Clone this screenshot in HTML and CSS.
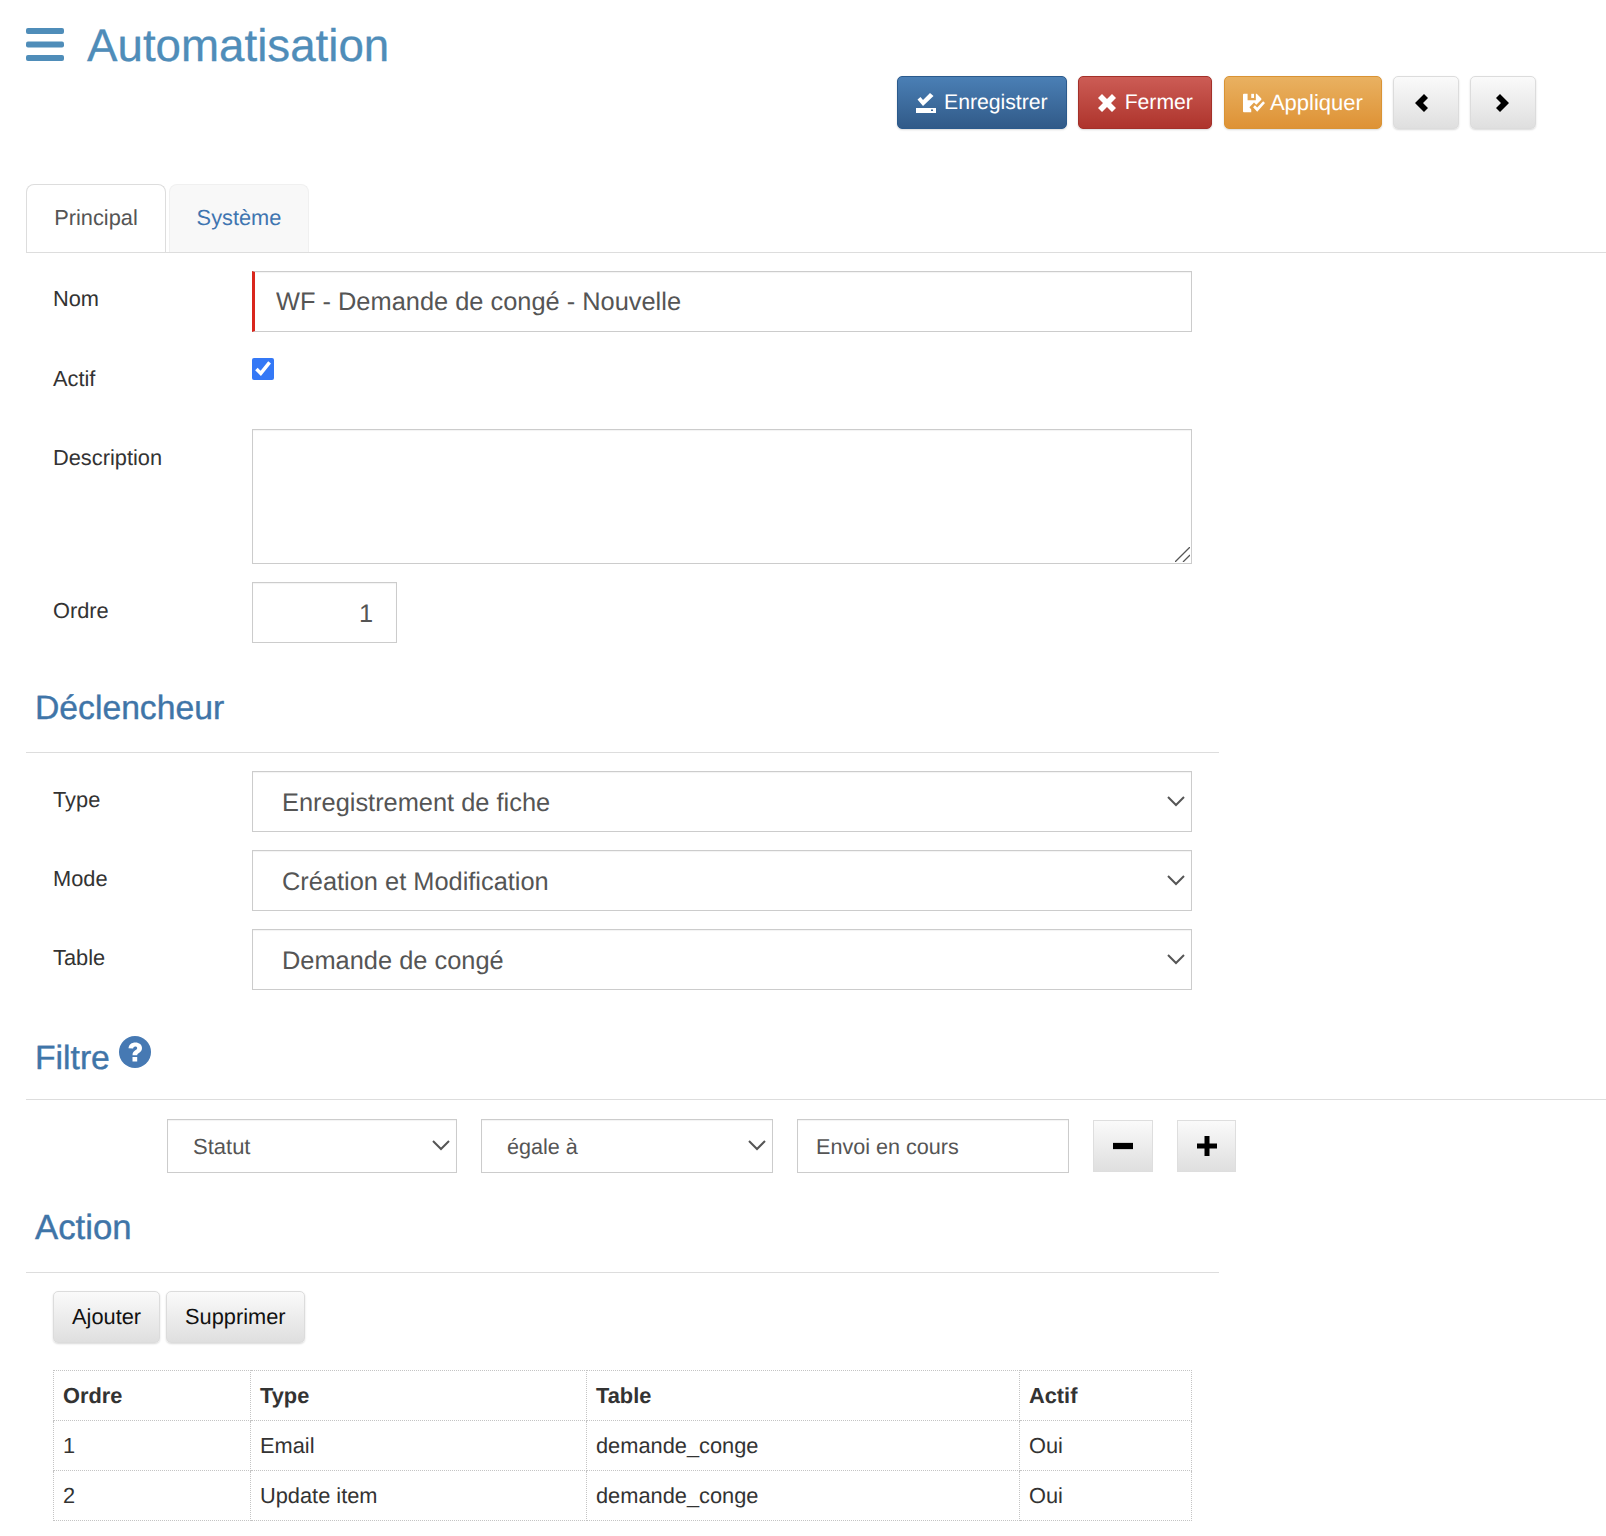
FILE: index.html
```html
<!doctype html>
<html>
  <head>
    <title>Automatisation</title>
    <meta name="viewport" content="width=device-width, initial-scale=1.0" />
    <link rel="stylesheet" href="styles.css">
  </head>
  <body>
    <div class="page-head">
      <svg class="burger" viewBox="0 0 38 33"><rect width="38" height="6" y="0" rx="2"/><rect width="38" height="6" y="13.5" rx="2"/><rect width="38" height="6" y="27" rx="2"/></svg>
      <h1>Automatisation</h1>
    </div>

    <div class="toolbar">
      <button class="btn btn-blue">
        <svg viewBox="0 0 20 20" class="ico"><path d="M1.500 6.500L4.500 4 7 7l7-7 3.500 3L7 13z"/><path fill-rule="evenodd" d="M0 15h20v5H0zM15 16.500v1.500h2v-1.500z"/></svg>
        Enregistrer
      </button>
      <button class="btn btn-red">
        <svg viewBox="0 0 20 20" class="ico"><path d="M5 1l5 5 5-5 4 4-5 5 5 5-4 4-5-5-5 5-4-4 5-5-5-5z"/></svg>
        Fermer
      </button>
      <button class="btn btn-orange">
        <svg viewBox="0 0 24 20" class="ico ico-wide"><path d="M0 1a1 1 0 011-1h4v7h9V0h1l5 5v1.500l-5.500 5.500-2.500-2.500-5 5 2 2.500v3H1a1 1 0 01-1-1z"/><path d="M9 0h3v4.500H9z"/><path d="M11 14.500l2-2 2.500 2.500 6.500-7 2 2-8.500 9.500z"/></svg>
        Appliquer
      </button>
      <button class="btn btn-grey btn-arrow arrow-prev">
        <svg viewBox="0 0 14 18" class="arrow"><path d="M9 0l4 4-5 5 5 5-4 4-9-9z"/></svg>
      </button>
      <button class="btn btn-grey btn-arrow arrow-next">
        <svg viewBox="0 0 14 18" class="arrow"><path d="M5 0l9 9-9 9-4-4 5-5-5-5z"/></svg>
      </button>
    </div>

    <div class="tabs">
      <a class="tab active">Principal</a>
      <a class="tab">Système</a>
    </div>

    <div class="form-row row-name">
      <label>Nom</label>
      <input class="field required" type="text" value="WF - Demande de congé - Nouvelle" />
    </div>
    <div class="form-row row-check">
      <label>Actif</label>
      <input class="check" type="checkbox" checked />
    </div>
    <div class="form-row row-desc">
      <label>Description</label>
      <div class="area-wrap">
        <textarea class="field area"></textarea>
        <svg class="grip" viewBox="0 0 15 15"><path d="M0 15L15 0M8 15l7-7"/></svg>
      </div>
    </div>
    <div class="form-row row-order">
      <label>Ordre</label>
      <input class="field number" type="text" value="1" />
    </div>

    <h2 class="section trigger-title">Déclencheur</h2>
    <hr class="rule short" />
    <div class="form-row row-select">
      <label>Type</label>
      <div class="select big"><span>Enregistrement de fiche</span><svg class="chev" viewBox="0 0 18 11"><path d="M1 1l8 8 8-8"/></svg></div>
    </div>
    <div class="form-row row-select">
      <label>Mode</label>
      <div class="select big"><span>Création et Modification</span><svg class="chev" viewBox="0 0 18 11"><path d="M1 1l8 8 8-8"/></svg></div>
    </div>
    <div class="form-row row-select">
      <label>Table</label>
      <div class="select big"><span>Demande de congé</span><svg class="chev" viewBox="0 0 18 11"><path d="M1 1l8 8 8-8"/></svg></div>
    </div>

    <h2 class="section filter-title">Filtre
      <svg class="help" viewBox="0 0 32 32"><circle cx="16" cy="16" r="16"/><path class="help-mark" d="M9.500 12.200C9.900 8.600 12.600 6.500 16.400 6.500c3.800 0 6.600 2.300 6.600 5.500 0 2.500-1.300 3.800-3 4.900-1.300.8-1.800 1.300-1.800 2.300h-4.700c0-2.600 1-3.800 2.800-5 1.300-.8 1.900-1.300 1.900-2.200 0-1-.8-1.600-1.900-1.600-1.200 0-2 .8-2.200 2.200zM13.500 21h4.700v4.500h-4.700z"/></svg>
    </h2>
    <hr class="rule filter-rule" />
    <div class="filter-row">
      <div class="select small sel-a"><span>Statut</span><svg class="chev" viewBox="0 0 18 11"><path d="M1 1l8 8 8-8"/></svg></div>
      <div class="select small sel-b"><span>égale à</span><svg class="chev" viewBox="0 0 18 11"><path d="M1 1l8 8 8-8"/></svg></div>
      <input class="field filter-value" type="text" value="Envoi en cours" />
      <button class="square"><svg viewBox="0 0 16 16"><path d="M0 5.500h16v5H0z"/></svg></button>
      <button class="square square-plus"><svg viewBox="0 0 20 20"><path d="M7.500 0h5v7.500H20v5h-7.500V20h-5v-7.500H0v-5h7.500z"/></svg></button>
    </div>

    <h2 class="section action-title">Action</h2>
    <hr class="rule short action-rule" />
    <div class="actions">
      <button class="btn btn-grey btn-text">Ajouter</button>
      <button class="btn btn-grey btn-text">Supprimer</button>
    </div>

    <table class="grid">
      <tr><th class="c1">Ordre</th><th class="c2">Type</th><th class="c3">Table</th><th>Actif</th></tr>
      <tr><td>1</td><td>Email</td><td>demande_conge</td><td>Oui</td></tr>
      <tr><td>2</td><td>Update item</td><td>demande_conge</td><td>Oui</td></tr>
    </table>
  </body>
</html>
```

FILE: styles.css
```css
body {
  font-family: "Liberation Sans", Arial, sans-serif;
  font-size: 21.800px;
  margin: 0;
  padding: 0;
  background-color: #fff;
  color: #333;
  overflow-x: hidden;
  text-rendering: geometricPrecision;
}

/* header */
.page-head {
  display: flex;
  align-items: center;
  height: 44px;
  padding: 23px 0 0 26px;
}

.burger {
  width: 38px;
  height: 33px;
  margin-bottom: 2px;
  fill: #4f8db9;
}

h1 {
  font-size: 45.700px;
  font-weight: normal;
  color: #4f8db9;
  margin: 2px 0 0 23px;
  -webkit-text-stroke: 0.3px #4f8db9;
}

.toolbar {
  display: flex;
  gap: 11px;
  height: 53px;
  margin: 9px 0 0 897px;
}

.btn {
  font-family: inherit;
  font-size: 21.200px;
  text-rendering: geometricPrecision;
  height: 53px;
  padding: 0 18px;
  border-radius: 5px;
  cursor: pointer;
  display: flex;
  align-items: center;
  gap: 8px;
  box-shadow: 0 1px 2px rgba(0, 0, 0, 0.15);
}

.ico {
  fill: #fff;
  width: 20px;
  height: 20px;
}

.ico-wide {
  width: 22px;
  margin-right: -3px;
}

.btn-blue {
  color: #fff;
  border: 1px solid #2b5a8c;
  background: linear-gradient(#4a7fb5, #315a88);
}

.btn-red {
  color: #fff;
  border: 1px solid #a33029;
  background: linear-gradient(#cc5c55, #ae342c);
}

.btn-orange {
  color: #fff;
  font-size: 22px;
  margin-left: 1px;
  border: 1px solid #d99334;
  background: linear-gradient(#e9b161, #de9235);
}

.btn-grey {
  color: #111;
  border: 1px solid #dcdcdc;
  background: linear-gradient(#fafafa, #dfdfdf);
}

.btn-arrow {
  width: 66px;
  padding: 0;
  justify-content: center;
}

.arrow-prev {
  padding-right: 7px;
}

.arrow-next {
  padding-right: 2px;
}

.arrow {
  width: 14px;
  height: 18px;
  fill: #000;
}

/* tabs */
.tabs {
  display: flex;
  gap: 3px;
  margin: 54px 0 0 26px;
  border-bottom: 1px solid #ddd;
  height: 69px;
  width: 1580px;
}

.tab {
  box-sizing: content-box;
  width: 138px;
  height: 67px;
  margin-top: 1px;
  text-align: center;
  line-height: 66px;
  border: 1px solid #f0f0f0;
  border-bottom: none;
  border-radius: 8px 8px 0 0;
  background-color: #f8f8f8;
  color: #3f75b0;
}

.tab.active {
  background-color: #fff;
  color: #555;
  border-color: #ddd;
}

/* form rows */
.form-row {
  display: flex;
  padding-left: 53px;
}

.form-row label {
  width: 199px;
  padding-top: 16px;
  line-height: 26px;
}

.row-name label {
  padding-top: 15px;
}

.field {
  font-family: inherit;
  text-rendering: geometricPrecision;
  color: #555;
  background-color: #fff;
  border: 1px solid #ccc;
  box-sizing: border-box;
  box-shadow: inset 0 1px 1px rgba(0, 0, 0, 0.05);
  outline: none;
  margin: 0;
}

.row-name {
  margin-top: 18px;
}

.required {
  width: 940px;
  height: 61px;
  font-size: 25.400px;
  padding: 2px 21px 0 21px;
  border-left: 3px solid #d9261c;
}

.row-check {
  margin-top: 18px;
  height: 79px;
}

.check {
  width: 22px;
  height: 22px;
  margin: 8px 0 0 0;
  accent-color: #3478f6;
}

.area-wrap {
  position: relative;
  width: 940px;
  height: 135px;
}

.row-desc .area {
  display: block;
  width: 940px;
  height: 135px;
  font-size: 25.400px;
  padding: 10px 21px;
  resize: none;
}

.grip {
  position: absolute;
  right: 2px;
  bottom: 2px;
  width: 15px;
  height: 15px;
  fill: none;
  stroke: #555;
  stroke-width: 1.300;
}

.row-order {
  margin-top: 18px;
}

.number {
  width: 145px;
  height: 61px;
  font-size: 25.400px;
  text-align: right;
  padding: 3px 23px 0 0;
}

/* sections */
.section {
  font-size: 33px;
  font-weight: normal;
  color: #3f75a8;
  margin: 44px 0 0 35px;
  line-height: 40px;
  height: 40px;
  -webkit-text-stroke: 0.4px #3f75a8;
}

.trigger-title {
  font-size: 33.700px;
  margin-top: 45px;
}

.rule {
  border: none;
  border-top: 1px solid #ddd;
  margin: 24px 0 0 26px;
  width: 1580px;
}

.rule.short {
  width: 1193px;
}

.select {
  position: relative;
  box-sizing: border-box;
  border: 1px solid #ccc;
  color: #555;
  display: flex;
  align-items: center;
  box-shadow: inset 0 1px 1px rgba(0, 0, 0, 0.05);
}

.chev {
  position: absolute;
  right: 6px;
  top: 50%;
  width: 18px;
  height: 11px;
  margin-top: -6px;
  fill: none;
  stroke: #555;
  stroke-width: 2;
}

.select.big {
  width: 940px;
  height: 61px;
  font-size: 25.400px;
  padding: 4px 0 0 29px;
}

.row-select {
  margin-top: 18px;
}

.filter-title {
  font-size: 33.700px;
  margin-top: 48px;
  display: flex;
  align-items: flex-start;
  gap: 9px;
}

.help {
  width: 32px;
  height: 32px;
  margin-top: -2px;
  fill: #4679b3;
  stroke: none;
}

.help-mark {
  fill: #fff;
}

.filter-rule {
  margin-top: 21px;
}

.filter-row {
  display: flex;
  align-items: center;
  margin: 19px 0 0 167px;
}

.select.small {
  height: 54px;
  padding: 2px 0 0 25px;
  font-size: 22px;
}

.sel-a {
  width: 290px;
  margin-right: 24px;
}

.select.sel-b {
  width: 292px;
  margin-right: 24px;
  font-size: 21.600px;
}

.filter-value {
  width: 272px;
  height: 54px;
  font-size: 21.600px;
  padding: 2px 18px 0;
  margin-right: 24px;
}

.square {
  width: 60px;
  height: 52px;
  margin-right: 24px;
  padding: 0;
  border: 1px solid #dedede;
  background: linear-gradient(#fafafa, #dfdfdf);
  display: flex;
  align-items: center;
  justify-content: center;
}

.square svg {
  width: 20px;
  height: 20px;
}

.square-plus {
  width: 59px;
}

.action-title {
  font-size: 34.800px;
  margin: 35px 0 0 35px;
}

.action-rule {
  margin-top: 24px;
}

.actions {
  display: flex;
  gap: 6px;
  margin: 18px 0 0 53px;
}

.btn-text {
  height: 52px;
  padding: 0 18px;
  font-size: 21.800px;
}

/* table */
.grid {
  border-collapse: collapse;
  margin: 27px 0 0 53px;
  width: 1139px;
  table-layout: fixed;
}

.grid th,
.grid td {
  border: 1px dotted #c4c4c4;
  height: 49px;
  padding: 0 9px;
  text-align: left;
  font-size: 21.800px;
}

.c1 {
  width: 178px;
}

.c2 {
  width: 317px;
}

.c3 {
  width: 414px;
}
```
